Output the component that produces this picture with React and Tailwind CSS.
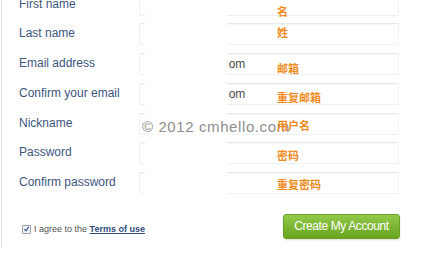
import React from 'react';

const fields = [
  { label: 'First name', tail: '' },
  { label: 'Last name', tail: '' },
  { label: 'Email address', tail: 'om' },
  { label: 'Confirm your email', tail: 'om' },
  { label: 'Nickname', tail: '' },
  { label: 'Password', tail: '' },
  { label: 'Confirm password', tail: '' },
];

// hand-placed annotations over the form
const notes = [
  { text: '名', top: 'top-[4px]' },
  { text: '姓', top: 'top-[25px]' },
  { text: '邮箱', top: 'top-[61px]' },
  { text: '重复邮箱', top: 'top-[90px]' },
  { text: '用户名', top: 'top-[118px]' },
  { text: '密码', top: 'top-[148px]' },
  { text: '重复密码', top: 'top-[177px]' },
];

const FieldRow = ({ label, tail }) => (
  <div className="flex h-[29.75px] items-start">
    <div className="w-[120px] h-[22px] flex items-center text-[12px] leading-none text-[#3d557f] -mt-px">
      {label}
    </div>
    <div className="w-[260px] h-[22px] flex items-center rounded-[2px] border border-[#f0f0f0] border-t-[#e8e8e8] bg-white shadow-[inset_0_1px_1px_rgba(0,0,0,0.03)] pl-[6px] text-[12px]">
      <span className="text-[#dadada]">i</span>
      {tail && <span className="ml-[80px] text-[#4a4a4a]">{tail}</span>}
    </div>
  </div>
);

const App = () => {
  return (
    <div
      className="relative w-[426px] h-[254px] overflow-hidden bg-white pl-px"
      style={{ fontFamily: '"Liberation Sans", Arial, "Noto Sans CJK SC", sans-serif' }}
    >
      <div className="h-full border-l border-[#dcdcdc] pl-[17px]">
        <div className="flex flex-col -mt-[6.5px]">
          {fields.map((f) => (
            <FieldRow key={f.label} {...f} />
          ))}
        </div>

        <div className="flex items-center justify-between pr-[26px] mt-[12px]">
          <label className="flex items-center gap-[3px] mt-[6px] text-[9px] text-[#555] pl-[3px]">
            <span className="w-[9px] h-[9px] flex items-center justify-center border border-[#9aa3ad] bg-[#eef1f5] rounded-[1px]">
              <svg viewBox="0 0 10 10" className="w-[8px] h-[8px]">
                <path d="M2 5.2 L4.2 7.6 L8.2 1.8" fill="none" stroke="#2b4f8f" strokeWidth="1.6" />
              </svg>
            </span>
            <span>
              I agree to the{' '}
              <span className="font-bold underline text-[#2e4a7a]">Terms of use</span>
            </span>
          </label>

          <button className="w-[117px] h-[25px] rounded-[3px] border border-[#6b9f26] bg-gradient-to-b from-[#92c948] to-[#68a51e] text-white text-[12px] tracking-[-0.4px] shadow-[0_1px_2px_rgba(0,0,0,0.15)]">
            Create My Account
          </button>
        </div>
      </div>

      {/* erased strip over the inputs */}
      <div className="absolute left-[145px] top-0 w-[82px] h-[198px] bg-white" />

      <div className="absolute left-[142px] top-[119px] text-[15px] leading-none tracking-[0.6px] text-[#8e8e8e] whitespace-nowrap">
        © 2012 cmhello.com
      </div>

      {notes.map((n) => (
        <div
          key={n.text}
          className={`absolute left-[277px] ${n.top} text-[11px] font-bold text-[#f08a1e] whitespace-nowrap`}
        >
          {n.text}
        </div>
      ))}
    </div>
  );
};

export default App;
